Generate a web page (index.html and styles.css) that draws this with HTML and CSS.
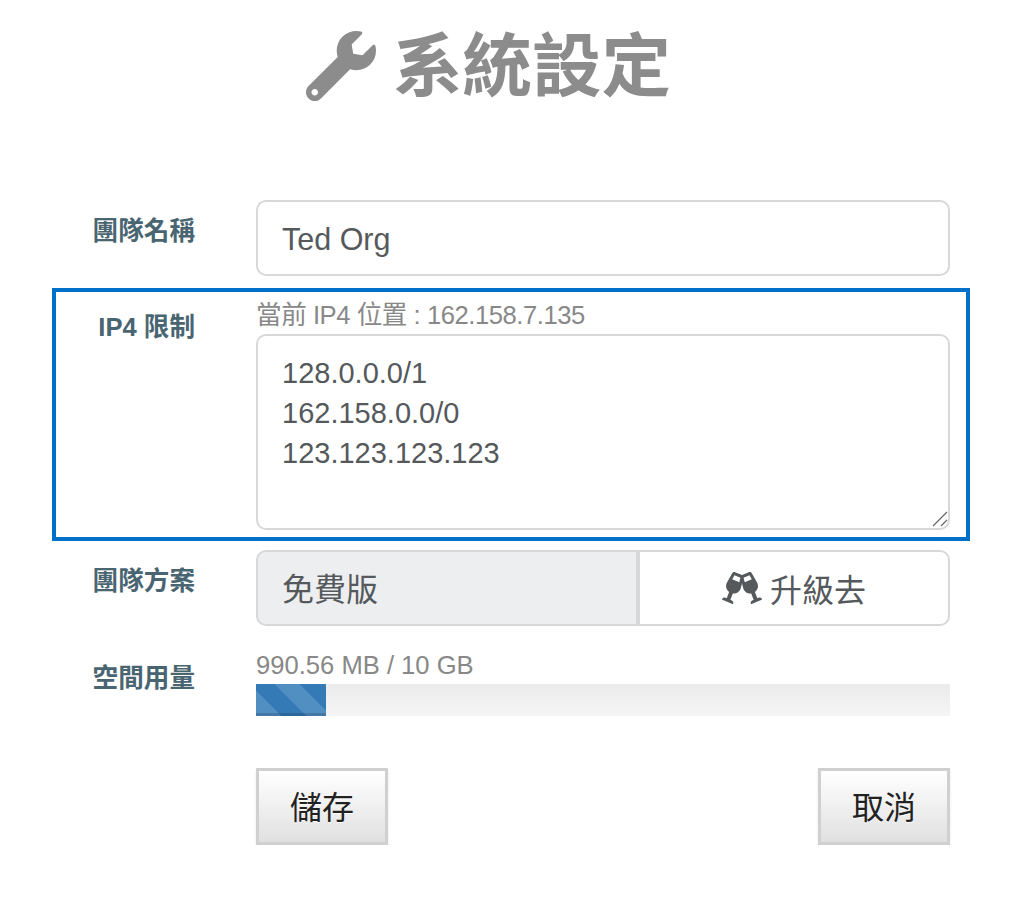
FILE: index.html
```html
<!DOCTYPE html>
<html lang="zh-Hant">
<head>
    <meta charset="UTF-8">
    <title>系統設定</title>
    <link rel="stylesheet" href="styles.css">
</head>
<body>
    <h1 class="title">
        <svg class="title-icon" viewBox="0 0 512 512" aria-hidden="true"><path d="M507.73 109.1c-2.24-9.03-13.54-12.09-20.12-5.51l-74.36 74.36-67.88-11.31-11.31-67.88 74.36-74.36c6.62-6.62 3.43-17.9-5.66-20.16-47.38-11.74-99.55.91-136.58 37.93-39.64 39.64-50.55 97.1-34.05 147.2L18.74 402.76c-24.99 24.99-24.99 65.51 0 90.5 24.99 24.99 65.51 24.99 90.5 0l213.21-213.21c50.12 16.71 107.47 5.68 147.37-34.22 37.07-37.07 49.7-89.32 37.91-136.73zM64 472c-13.25 0-24-10.75-24-24 0-13.26 10.75-24 24-24s24 10.74 24 24c0 13.25-10.75 24-24 24z"/></svg>
        系統設定
    </h1>

    <form class="settings">
        <div class="row row-name">
            <label class="row-label">團隊名稱</label>
            <div class="row-body">
                <input class="field" type="text" value="Ted Org">
            </div>
        </div>

        <div class="row row-ip">
            <label class="row-label">IP4 限制</label>
            <div class="row-body">
                <div class="hint hint-ip">當前 IP4 位置 : 162.158.7.135</div>
                <div class="area-wrap">
                    <textarea class="field field-area">128.0.0.0/1
162.158.0.0/0
123.123.123.123</textarea>
                    <svg class="grip" viewBox="0 0 16 16" aria-hidden="true"><path d="M1 15L15 1M9 15l6-6"/></svg>
                </div>
            </div>
        </div>

        <div class="row row-plan">
            <label class="row-label">團隊方案</label>
            <div class="row-body plan">
                <div class="plan-name">免費版</div>
                <a class="plan-upgrade" href="#">
                    <svg class="cheers" viewBox="0 0 640 512" aria-hidden="true"><path d="M639.4 433.6c-8.4-20.4-31.8-30.1-52.2-21.6l-22.1 9.2-38.7-101.9c47.9-35 64.8-100.3 34.5-152.8L474.3 16c-8.8-15.3-27.7-21.1-43.8-13.9L320 49.3 209.5 2.2C193.4-5 174.5.8 165.7 16L79.6 166.3c-30.3 52.5-13.4 117.8 34.5 152.8L75.4 421.2l-22.1-9.2c-20.4-8.5-43.7 1.2-52.2 21.6-1.7 4.1.2 8.8 4.3 10.5l162.3 67.4c4.1 1.7 8.7-.2 10.4-4.3 8.4-20.4-1.2-43.8-21.6-52.3l-22.1-9.2L173.3 342c4.4.5 8.8 1.3 13.1 1.3 51.7 0 99.4-33.1 113.4-85.3l20.2-75.4 20.2 75.4c14 52.2 61.7 85.3 113.4 85.3 4.3 0 8.7-.8 13.1-1.3L506 445.6l-22.1 9.2c-20.4 8.5-30.1 31.9-21.6 52.3 1.7 4.1 6.4 6 10.4 4.3L635.1 444c4.1-1.7 6-6.4 4.3-10.4zM275.9 162.1l-112.1-46.5 36.5-63.4 94.5 40.2-18.9 69.7zm88.2 0l-18.9-69.7 94.5-40.2 36.5 63.4-112.1 46.5z"/></svg>
                    升級去
                </a>
            </div>
        </div>

        <div class="row row-usage">
            <label class="row-label">空間用量</label>
            <div class="row-body">
                <div class="hint hint-usage">990.56 MB / 10 GB</div>
                <div class="progress">
                    <div class="progress-bar" style="width: 10.1%"></div>
                </div>
            </div>
        </div>

        <div class="actions">
            <button class="btn" type="button">儲存</button>
            <button class="btn" type="button">取消</button>
        </div>
    </form>
</body>
</html>
```

FILE: styles.css
```css
body {
    margin: 0;
    background: #fff;
    font-family: "Liberation Sans", "Noto Sans CJK TC", sans-serif;
    color: #55595c;
}
.title {
    display: flex;
    justify-content: center;
    align-items: center;
    gap: 17px;
    height: 72px;
    margin: 24px 0 104px;
    padding-right: 43px;
    font-size: 69.5px;
    font-weight: 700;
    color: #8c8c8c;
}
.title-icon {
    width: 70px;
    height: 70px;
    margin-top: 11px;
    fill: #8c8c8c;
}
.settings {
    padding: 0 50px 0 52px;
}
.row {
    display: flex;
}
.row-label {
    width: 143px;
    flex: none;
    margin-right: 61px;
    text-align: right;
    font-size: 25.6px;
    font-weight: 700;
    line-height: 32px;
    color: #4a6572;
}
.row-body {
    flex: 1;
    min-width: 0;
}
.row-name {
    padding: 0 20px 0 0;
    margin-bottom: 12px;
}
.row-name .row-label {
    padding-top: 15px;
}
.row-ip {
    height: 253px;
    box-sizing: border-box;
    border: 4px solid #0070c9;
    margin-bottom: 9px;
    padding-right: 16px;
}
.row-ip .row-label {
    width: 139px;
    padding-top: 19px;
}
.row-plan {
    padding-right: 20px;
    margin-bottom: 24px;
}
.row-plan .row-label {
    padding-top: 15px;
}
.row-usage {
    padding-right: 20px;
}
.row-usage .row-label {
    padding-top: 12px;
}
.field {
    display: block;
    width: 100%;
    box-sizing: border-box;
    height: 76px;
    padding: 2px 24px 0;
    border: 2px solid #d8d8d8;
    border-radius: 10px;
    font-family: "Liberation Sans", "Noto Sans CJK TC", sans-serif;
    font-size: 30.5px;
    color: #55595c;
    background: #fff;
    outline: none;
}
.area-wrap {
    position: relative;
}
.field-area {
    height: 196px;
    padding: 17px 24px;
    font-size: 29px;
    line-height: 40px;
    resize: none;
}
.grip {
    position: absolute;
    right: 2px;
    bottom: 3px;
    width: 16px;
    height: 16px;
    fill: none;
    stroke: #666;
    stroke-width: 1.2;
}
.hint {
    font-size: 25.6px;
    color: #888;
}
.hint-ip {
    height: 42px;
    line-height: 46px;
    letter-spacing: -0.45px;
}
.hint-usage {
    height: 34px;
    line-height: 30px;
}
.plan {
    display: flex;
    height: 76px;
}
.plan-name {
    width: 382px;
    box-sizing: border-box;
    border: 2px solid #d8d8d8;
    border-radius: 10px 0 0 10px;
    padding-left: 24px;
    background: #eceeef;
    font-size: 32px;
    line-height: 76px;
}
.plan-upgrade {
    flex: 1;
    display: flex;
    justify-content: center;
    align-items: center;
    gap: 8px;
    border: 2px solid #d8d8d8;
    border-radius: 0 10px 10px 0;
    font-size: 32px;
    color: #55595c;
    text-decoration: none;
}
.cheers {
    width: 40px;
    height: 32px;
    fill: #55595c;
}
.progress {
    height: 32px;
    background: linear-gradient(to bottom, #ebebeb 0, #f5f5f5 100%);
    overflow: hidden;
}
.progress-bar {
    height: 100%;
    background-color: #337ab7;
    background-image: linear-gradient(45deg, rgba(255, 255, 255, 0.15) 25%, transparent 25%, transparent 50%, rgba(255, 255, 255, 0.15) 50%, rgba(255, 255, 255, 0.15) 75%, transparent 75%, transparent);
    background-size: 50px 50px;
    background-position: 19px 0;
    box-shadow: inset 0 -3px 0 rgba(0, 0, 0, 0.15);
}
.actions {
    display: flex;
    justify-content: space-between;
    margin: 52px 20px 0 204px;
}
.btn {
    width: 132px;
    height: 77px;
    padding: 0 0 4px;
    border: 3px solid #d0d0d0;
    border-radius: 0;
    background: linear-gradient(to bottom, #fff 0, #e0e0e0 100%);
    box-shadow: 0 2px 3px rgba(0, 0, 0, 0.08);
    font-family: "Liberation Sans", "Noto Sans CJK TC", sans-serif;
    font-size: 32px;
    color: #222;
    text-shadow: 0 1px 0 #fff;
    cursor: pointer;
}
```
